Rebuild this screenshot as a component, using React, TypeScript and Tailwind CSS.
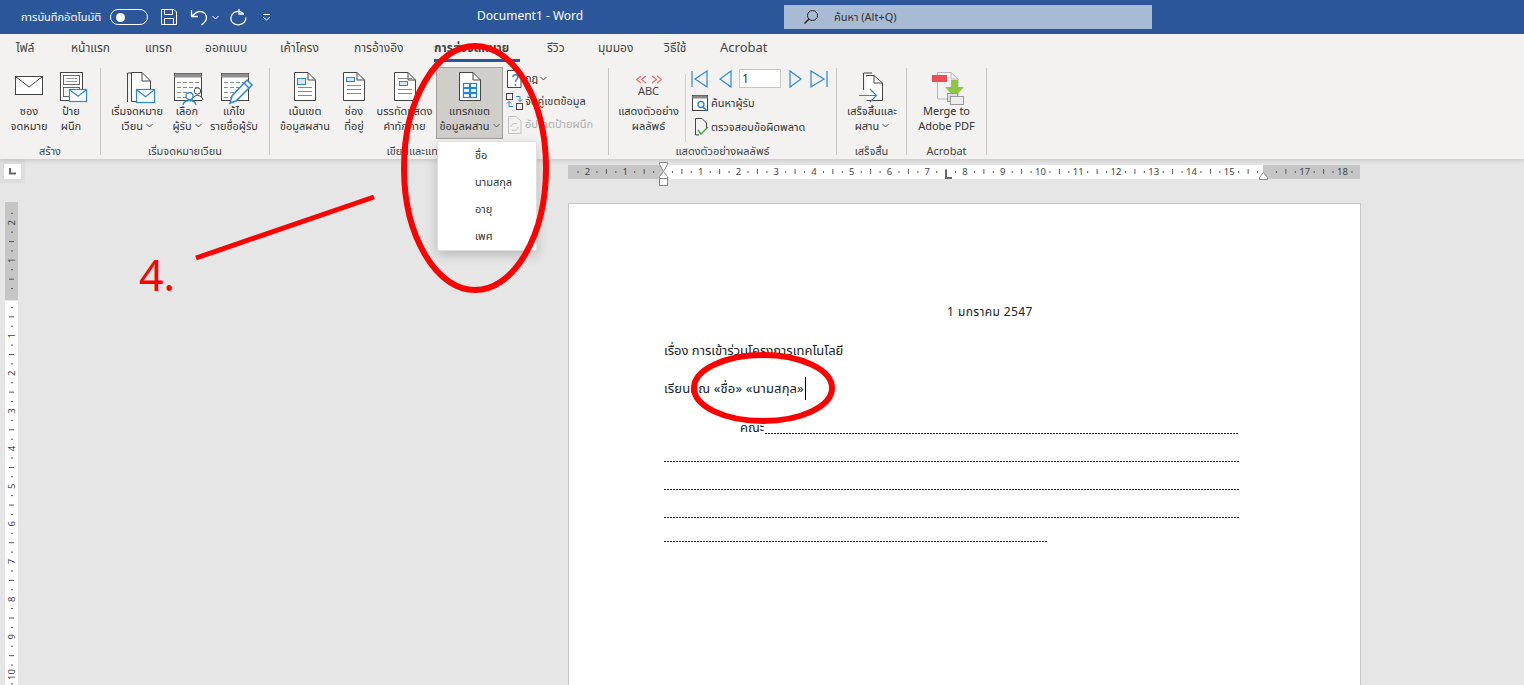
import React from "react";

const Doc = ({ children }: { children?: React.ReactNode }) => (
  <svg width="34" height="29" viewBox="0 0 34 29" fill="none">
    <path d="M6.500 .5H20L27.500 8V28.500H6.500Z" fill="#fff" stroke="#444" />
    <path d="M20 .5V8H27.500" stroke="#444" />
    {children}
  </svg>
);
const Lines = ({ y = 14, x = 10, w = 14, n = 4 }: { y?: number; x?: number; w?: number; n?: number }) => (
  <g stroke="#8a8a8a">
    {Array.from({ length: n }).map((_, i) => (
      <path key={i} d={`M${x} ${y + i * 4}.5h${w}`} />
    ))}
  </g>
);
const Envelope = ({ x, y, w, h }: { x: number; y: number; w: number; h: number }) => (
  <g>
    <rect x={x + 0.5} y={y + 0.5} width={w} height={h} fill="#fff" stroke="#2b88d8" strokeWidth="1.200" />
    <path d={`M${x + 1} ${y + 1}L${x + w / 2 + 0.5} ${y + h * 0.6}L${x + w} ${y + 1}`} stroke="#2b88d8" strokeWidth="1.200" fill="none" />
  </g>
);
const TableIcon = ({ children }: { children?: React.ReactNode }) => (
  <svg width="34" height="34" viewBox="-2 0 34 34" fill="none" className="overflow-visible">
    <rect x="2.500" y="1.500" width="27" height="27" fill="#fff" stroke="#444" />
    <rect x="2.500" y="1.500" width="27" height="4" fill="#8f8f8f" />
    <g stroke="#8a8a8a" strokeDasharray="4 2">
      <path d="M5 10.500h23M5 15.500h23M5 20.500h15M5 25.500h10" />
    </g>
    {children}
  </svg>
);

const Btn = ({ w, icon, l1, l2, caret }: { w: string; icon: React.ReactNode; l1: string; l2: string; caret?: boolean }) => (
  <div className={`flex flex-col items-center pt-[4px] shrink-0 ${w}`}>
    <div className="h-[31px] flex items-start justify-center">{icon}</div>
    <div className="leading-[15px] whitespace-nowrap text-center">{l1}</div>
    <div className="leading-[15px] whitespace-nowrap text-center flex items-center gap-[3px]">
      {l2}
      {caret && <Caret />}
    </div>
  </div>
);
const Caret = ({ c = "#555" }: { c?: string }) => (
  <svg width="7" height="5" viewBox="0 0 7 5" fill="none">
    <path d="M.5 1L3.500 4L6.500 1" stroke={c} />
  </svg>
);
const Group = ({ w, label, children }: { w: string; label: string; children: React.ReactNode }) => (
  <div className={`h-[87px] shrink-0 border-r border-[#c8c6c4] flex flex-col ${w}`}>
    <div className="h-[76px] flex">{children}</div>
    <div className="h-[11px] leading-[14px] text-center whitespace-nowrap text-[#444]">{label}</div>
  </div>
);

const tabs = [
  ["ไฟล์", "w-[55px]"],
  ["หน้าแรก", "w-[74px]"],
  ["แทรก", "w-[60px]"],
  ["ออกแบบ", "w-[75px]"],
  ["เค้าโครง", "w-[74px]"],
  ["การอ้างอิง", "w-[80px]"],
];

const HRuler = () => {
  const unit = 37.75;
  const zero = 95;
  const marks: React.ReactNode[] = [];
  for (let i = -3; i < 19; i++) {
    const x = zero + i * unit;
    if (i !== 0 && i !== 16 && x > 2 && x < 790) marks.push(<text key={`n${i}`} x={x} y={10} fontSize="9.500" textAnchor="middle" fill="#444" fontFamily="'Noto Sans', sans-serif">{Math.abs(i)}</text>);
    [0.25, 0.5, 0.75].forEach((f) => {
      const tx = x + f * unit;
      if (tx < 2 || tx > 790) return;
      marks.push(f === 0.5
        ? <path key={`t${i}${f}`} d={`M${tx} 4v5`} stroke="#555" />
        : <path key={`t${i}${f}`} d={`M${tx} 6v2`} stroke="#555" />);
    });
  }
  return (
    <svg width="792" height="24" viewBox="0 0 792 24" className="block overflow-visible">
      <rect x="0" y="0" width="792" height="14" fill="#c6c6c6" />
      <rect x="95" y="0" width="600" height="14" fill="#fff" />
      {marks}
      <path d="M378 5V13H384" stroke="#666" strokeWidth="2" fill="none" />
      <path d="M91.500 -2.500h8v2l-4 7l-4 -7z" fill="#fff" stroke="#888" />
      <path d="M95.500 6.500l4 5v2h-8v-2z" fill="#fff" stroke="#888" />
      <rect x="91.500" y="13.500" width="8" height="7" fill="#fff" stroke="#888" />
      <path d="M691.500 12.500l4 -5l4 5v2h-8z" fill="#fff" stroke="#888" />
    </svg>
  );
};

const VRuler = () => {
  const unit = 37.65;
  const zero = 96;
  const marks: React.ReactNode[] = [];
  for (let i = -3; i < 11; i++) {
    const y = zero + i * unit;
    if (i !== 0 && y > 2) marks.push(<text key={`n${i}`} transform={`translate(10,${y}) rotate(-90)`} fontSize="9.500" textAnchor="middle" fill="#444" fontFamily="'Noto Sans', sans-serif">{Math.abs(i)}</text>);
    [0.25, 0.5, 0.75].forEach((f) => {
      const ty = y + f * unit;
      if (ty < 2 || ty > 490) return;
      marks.push(f === 0.5
        ? <path key={`t${i}${f}`} d={`M4 ${ty}h5`} stroke="#555" />
        : <path key={`t${i}${f}`} d={`M6 ${ty}h2`} stroke="#555" />);
    });
  }
  return (
    <svg width="13" height="483" viewBox="0 0 13 483" className="block">
      <rect width="13" height="98" fill="#c6c6c6" />
      <rect y="99" width="13" height="384" fill="#fff" />
      {marks}
    </svg>
  );
};

const Dots = ({ w, ml }: { w: string; ml: string }) => (
  <div className={`h-px bg-[repeating-linear-gradient(90deg,#222_0_2px,transparent_2px_3px)] ${w} ${ml}`} />
);

export default function App() {
  return (
    <div className="relative w-[1524px] h-[685px] overflow-hidden bg-[#e6e6e6] flex flex-col text-[11px] text-[#333] font-['Noto_Sans','Noto_Sans_Thai','DejaVu_Sans',sans-serif]">
      {/* Title bar */}
      <div className="h-[34px] shrink-0 bg-[#2b579a] text-white flex items-center relative">
        <span className="ml-[21px] w-[89px] text-[11px] whitespace-nowrap">การบันทึกอัตโนมัติ</span>
        <div className="w-[38px] h-[16px] rounded-full border border-white flex items-center pl-[5px]">
          <div className="w-[9px] h-[9px] rounded-full bg-white" />
        </div>
        <svg width="18" height="18" viewBox="0 0 18 18" fill="none" stroke="#fff" className="ml-[12px]">
          <path d="M1.500 1.500H14L16.500 4V16.500H1.500Z" />
          <path d="M4.500 1.500V6.500H12.500V1.500M4.500 16.500V10.500H13.500V16.500" />
        </svg>
        <svg width="18" height="18" viewBox="0 0 18 18" fill="none" stroke="#fff" strokeWidth="1.300" className="ml-[12px]">
          <path d="M1.500 2V8.500H8M1.500 8.500C5 5 7 3.500 10 3.500C14 3.500 16.500 6.500 16.500 9.500C16.500 12 15 14.500 11.500 17" />
        </svg>
        <span className="ml-[4px]"><Caret c="#fff" /></span>
        <svg width="18" height="18" viewBox="0 0 18 18" fill="none" stroke="#fff" strokeWidth="1.300" className="ml-[10px]">
          <path d="M10 1V6H15" />
          <path d="M14.500 5.500C11 3 7.500 2.500 4.500 5C1 8 1 12.500 4 15C7 17.500 12 17.500 15 14.500C16.500 13 17 11 17 9.500" />
        </svg>
        <svg width="9" height="8" viewBox="0 0 9 8" fill="none" stroke="#fff" className="ml-[15px]">
          <path d="M1 1.500h7M1 4L4.500 7L8 4" />
        </svg>
        <span className="absolute left-[477px] top-[8px] text-[12px] leading-[16px] whitespace-nowrap">Document1  -  Word</span>
        <div className="absolute left-[784px] top-[5px] w-[368px] h-[24px] bg-[#a7bbd5] flex items-center text-[#333]">
          <svg width="16" height="16" viewBox="0 0 16 16" fill="none" stroke="#222" className="ml-[19px]">
            <circle cx="9.500" cy="6.500" r="5" />
            <path d="M6 10L1.500 14.500" strokeWidth="1.400" />
          </svg>
          <span className="ml-[15px] text-[11px] whitespace-nowrap">ค้นหา (Alt+Q)</span>
        </div>
      </div>

      {/* Tabs + ribbon */}
      <div className="h-[125px] shrink-0 bg-[#f3f2f1] shadow-[0_2px_4px_rgba(0,0,0,0.12)] relative z-10">
        <div className="h-[28px] flex items-center pl-[16px] text-[12px] text-[#444]">
          {tabs.map(([t, w]) => (
            <span key={t} className={`whitespace-nowrap ${w}`}>{t}</span>
          ))}
          <span className="relative w-[113px] h-[28px] leading-[28px] font-bold whitespace-nowrap">
            การส่งจดหมาย
            <span className="absolute left-0 bottom-0 w-[86px] h-[3px] bg-[#2b579a]" />
          </span>
          <span className="w-[51px] whitespace-nowrap">รีวิว</span>
          <span className="w-[66px] whitespace-nowrap">มุมมอง</span>
          <span className="w-[56px] whitespace-nowrap">วิธีใช้</span>
          <span className="whitespace-nowrap text-[13px]">Acrobat</span>
        </div>

        <div className="flex pt-[6px]">
          <Group w="w-[101px]" label="สร้าง">
            <div className="w-[8px] shrink-0" />
            <Btn w="w-[42px]" l1="ซอง" l2="จดหมาย" icon={
              <svg width="30" height="24" viewBox="0 0 30 24" fill="none" stroke="#444" className="mt-[3px]">
                <rect x="1.500" y="1.500" width="27" height="18" fill="#fff" />
                <path d="M1.500 1.500L15 12L28.500 1.500" />
              </svg>} />
            <Btn w="w-[42px]" l1="ป้าย" l2="ผนึก" icon={
              <svg width="32" height="32" viewBox="-3 0 32 32" fill="none" className="overflow-visible">
                <rect x="2.500" y=".5" width="22" height="28" fill="#fff" stroke="#444" />
                <rect x="5.500" y="3.500" width="16" height="9" stroke="#666" />
                <path d="M8 6.500h11M8 9.500h11" stroke="#999" />
                <rect x="5.500" y="15.500" width="16" height="9" stroke="#666" />
                <Envelope x={11} y={17} w={17} h={12} />
              </svg>} />
          </Group>
          <Group w="w-[169px]" label="เริ่มจดหมายเวียน">
            <div className="w-[6px] shrink-0" />
            <Btn w="w-[60px]" l1="เริ่มจดหมาย" l2="เวียน" caret icon={
              <svg width="32" height="32" viewBox="-4 0 32 32" fill="none" className="overflow-visible">
                <path d="M2.500 30V1H10" stroke="#444" />
                <path d="M6.500 29.500V.5H17L25.500 9V29.500Z" fill="#fff" stroke="#444" />
                <path d="M17 .5V9H25.500" stroke="#444" />
                <Envelope x={11} y={17} w={18} h={13} />
              </svg>} />
            <Btn w="w-[40px]" l1="เลือก" l2="ผู้รับ" caret icon={
              <TableIcon>
                <circle cx="25.500" cy="19" r="3.200" fill="#fff" stroke="#444" />
                <path d="M20 28c.5-3 3-4.500 5.500-4.500s5 1.500 5.500 4.500" fill="#fff" stroke="#444" />
                <circle cx="17.500" cy="24" r="3.500" fill="#fff" stroke="#2b88d8" strokeWidth="1.300" />
                <path d="M11 33c.5-3 3-4.500 6.500-4.500s6 1.500 6.500 4.500" fill="#fff" stroke="#2b88d8" strokeWidth="1.300" />
              </TableIcon>} />
            <Btn w="w-[54px]" l1="แก้ไข" l2="รายชื่อผู้รับ" icon={
              <TableIcon>
                <path d="M28 8L33 13L17 29L11 31L13 24Z" fill="#fff" stroke="#2b88d8" strokeWidth="1.500" />
                <path d="M25 11L30 16" stroke="#2b88d8" strokeWidth="1.500" />
              </TableIcon>} />
          </Group>
          <Group w="w-[339px]" label="เขียนและแทรกเขตข้อมูล">
            <div className="w-[5px] shrink-0" />
            <Btn w="w-[60px]" l1="เน้นเขต" l2="ข้อมูลผสาน" icon={
              <Doc><rect x="9.500" y="6.500" width="8" height="6" fill="#d6e8f7" stroke="#2b88d8" /><Lines y={15} n={3} /></Doc>} />
            <Btn w="w-[38px]" l1="ช่อง" l2="ที่อยู่" icon={
              <Doc><rect x="9.500" y="5.500" width="8" height="4" fill="#d6e8f7" stroke="#2b88d8" /><Lines y={13} n={3} /></Doc>} />
            <Btn w="w-[63px]" l1="บรรทัดแสดง" l2="คำทักทาย" icon={
              <Doc><Lines y={6} n={1} /><rect x="11.500" y="9.500" width="8" height="4" fill="#d6e8f7" stroke="#2b88d8" /><Lines y={17} n={2} /></Doc>} />
            <div className="w-[67px] h-[72px] -mt-px shrink-0 bg-[#cfcecb] border border-[#a19f9d] flex flex-col items-center pt-[4px] text-[#333]">
              <div className="h-[31px] flex items-start justify-center">
                <Doc>
                  <g stroke="#1f86d8" strokeWidth="1.200" fill="none">
                    <rect x="10.500" y="11.500" width="6" height="4" /><rect x="17.500" y="11.500" width="6" height="4" />
                    <rect x="10.500" y="16.500" width="6" height="4" /><rect x="17.500" y="16.500" width="6" height="4" />
                    <rect x="10.500" y="21.500" width="6" height="4" /><rect x="17.500" y="21.500" width="6" height="4" />
                  </g>
                </Doc>
              </div>
              <div className="leading-[15px] whitespace-nowrap">แทรกเขต</div>
              <div className="leading-[15px] whitespace-nowrap flex items-center gap-[3px]">ข้อมูลผสาน <Caret /></div>
            </div>
            <div className="ml-[3px] -mt-px flex flex-col text-[11px]">
              <div className="h-[23px] flex items-center gap-[2px]">
                <svg width="17" height="20" viewBox="0 0 17 20" fill="none">
                  <path d="M1.500 1.500H10L15 6V18.500H1.500Z" fill="#fff" stroke="#444" />
                  <path d="M7 8c0-3 5-3 5 0c0 2-2.500 2-2.500 5M9.500 15v2" stroke="#2b88d8" strokeWidth="1.500" />
                </svg>
                <span>กฎ</span><Caret />
              </div>
              <div className="h-[23px] flex items-center gap-[2px] whitespace-nowrap">
                <svg width="17" height="17" viewBox="0 0 17 17" fill="none">
                  <rect x=".5" y=".5" width="6" height="6" stroke="#444" />
                  <rect x="10.500" y="10.500" width="6" height="6" stroke="#444" />
                  <path d="M10 3.500h4v5M12 6.500l2 2l2-2M7 13.500H3v-5M1 10.500l2-2l2 2" stroke="#2b88d8" />
                </svg>
                <span>จับคู่เขตข้อมูล</span>
              </div>
              <div className="h-[23px] flex items-center gap-[2px] whitespace-nowrap text-[#b0aeac]">
                <svg width="17" height="18" viewBox="0 0 17 18" fill="none" stroke="#c4c2c0">
                  <path d="M2.500 .5H10L15 5V17.500H2.500Z" />
                  <path d="M5 11c0-3 3-4 6-3M12 11c0 3-3 4-6 3" />
                </svg>
                <span>อัปเดตป้ายผนึก</span>
              </div>
            </div>
          </Group>
          <Group w="w-[228px]" label="แสดงตัวอย่างผลลัพธ์">
            <div className="w-[3px] shrink-0" />
            <Btn w="w-[73px]" l1="แสดงตัวอย่าง" l2="ผลลัพธ์" icon={
              <div className="flex flex-col items-center mt-[3px]">
                <svg width="28" height="9" viewBox="0 0 28 9" fill="none" stroke="#ef6a6a" strokeWidth="1.100">
                  <path d="M6 1L1.500 4.500L6 8M11 1L6.500 4.500L11 8M17 1L21.500 4.500L17 8M22 1L26.500 4.500L22 8" />
                </svg>
                <span className="text-[11px] leading-[14px] text-[#444]">ABC</span>
              </div>} />
            <div className="w-px h-[68px] bg-[#d2d0ce] mt-[6px] shrink-0" />
            <div className="ml-[5px] -mt-[2px] flex flex-col">
              <div className="h-[25px] flex items-center">
                <svg width="18" height="20" viewBox="0 0 18 20" fill="none" stroke="#2b88d8" strokeWidth="1.200">
                  <path d="M1 2v16M16 2L4 10l12 8z" />
                </svg>
                <svg width="14" height="20" viewBox="0 0 14 20" fill="none" stroke="#2b88d8" strokeWidth="1.200" className="ml-[9px]">
                  <path d="M13 2L2 10l11 8z" />
                </svg>
                <div className="ml-[7px] w-[42px] h-[19px] bg-white border border-[#c8c6c4] text-[12px] leading-[17px] pl-[2px]">1</div>
                <svg width="14" height="20" viewBox="0 0 14 20" fill="none" stroke="#2b88d8" strokeWidth="1.200" className="ml-[7px]">
                  <path d="M2 2l11 8l-11 8z" />
                </svg>
                <svg width="18" height="20" viewBox="0 0 18 20" fill="none" stroke="#2b88d8" strokeWidth="1.200" className="ml-[8px]">
                  <path d="M1 2l13 8l-13 8zM17 2v16" />
                </svg>
              </div>
              <div className="h-[25px] flex items-center gap-[2px] whitespace-nowrap pl-px">
                <svg width="17" height="18" viewBox="0 0 17 18" fill="none">
                  <rect x=".5" y=".5" width="15" height="15" fill="#fff" stroke="#444" />
                  <rect x=".5" y=".5" width="15" height="3" fill="#888" />
                  <circle cx="9" cy="9.500" r="3" stroke="#2b88d8" strokeWidth="1.400" />
                  <path d="M11 12l4 4" stroke="#2b88d8" strokeWidth="1.600" />
                </svg>
                <span>ค้นหาผู้รับ</span>
              </div>
              <div className="h-[22px] flex items-center gap-[2px] whitespace-nowrap pl-[3px]">
                <svg width="15" height="18" viewBox="0 0 15 18" fill="none">
                  <path d="M1.500 .5H8L12.500 5V10" stroke="#444" /><path d="M1.500 .5V17H5" stroke="#444" />
                  <path d="M4 12l3 4l7-7" stroke="#3fa34d" strokeWidth="1.400" />
                </svg>
                <span>ตรวจสอบข้อผิดพลาด</span>
              </div>
            </div>
          </Group>
          <Group w="w-[70px]" label="เสร็จสิ้น">
            <Btn w="w-[70px]" l1="เสร็จสิ้นและ" l2="ผสาน" caret icon={
              <svg width="32" height="32" viewBox="0 0 32 32" fill="none">
                <path d="M7.500 1H16" stroke="#444" />
                <path d="M10.500 4.500V3.500H18L26.500 11V28.500H10.500" fill="#fff" stroke="#444" />
                <path d="M18 3.500V11H26.500" stroke="#444" />
                <path d="M7.500 1V18" stroke="#444" />
                <path d="M3 23.500H20M14 17L20.500 23.500L14 30" stroke="#2b88d8" strokeWidth="1.200" />
              </svg>} />
          </Group>
          <Group w="w-[80px]" label="Acrobat">
            <Btn w="w-[79px]" l1="Merge to" l2="Adobe PDF" icon={
              <svg width="34" height="32" viewBox="-2 0 34 32" fill="none" className="overflow-visible">
                <path d="M5.500 .5H19L26 7V27H5.500Z" fill="#f4f4f4" stroke="#b8b8b8" />
                <path d="M19 .5V7H26" stroke="#b8b8b8" />
                <rect x="0" y="3" width="15" height="7" fill="#ee4d55" />
                <path d="M19 8H26V15H32L22.500 25L13 15H19Z" fill="#8cc63f" />
                <rect x="15.500" y="21.500" width="10" height="8" fill="#ddd" stroke="#999" />
                <rect x="18.500" y="24.500" width="13" height="8" fill="#eee" stroke="#999" />
              </svg>} />
          </Group>
        </div>
      </div>

      {/* Rulers row */}
      <div className="h-[43px] shrink-0 flex">
        <div className="w-[25px] h-[24px] bg-[#dedede] flex items-start justify-center pt-[5px]">
          <div className="w-[17px] h-[15px] bg-white flex items-center justify-center">
            <svg width="8" height="7" viewBox="0 0 8 7"><path d="M1 0V5.500H7" stroke="#666" strokeWidth="2" fill="none" /></svg>
          </div>
        </div>
        <div className="ml-[543px] mt-[6px]"><HRuler /></div>
      </div>

      {/* Document area */}
      <div className="flex-1 flex min-h-0">
        <div className="w-[18px] pl-[5px] shrink-0"><VRuler /></div>
        <div className="ml-[550px] mt-[1px] w-[793px] h-[500px] bg-white border border-[#c6c6c6] pl-[95px] text-[13px] text-[#222]">
          <div className="h-[99px]" />
          <div className="w-[652px] text-center text-[12px] tracking-[0.4px] leading-[18px] h-[38px]">1 มกราคม 2547</div>
          <div className="leading-[18px] h-[38px] whitespace-nowrap">เรื่อง การเข้าร่วมโครงการเทคโนโลยี</div>
          <div className="leading-[18px] h-[30px] flex whitespace-nowrap tracking-[0.13px]">
            เรียนคุณ «ชื่อ» «นามสกุล»
            <span className="w-px h-[23px] bg-black ml-px -mt-[2px]" />
          </div>
          <div className="pl-[76px] pt-[9px] leading-[18px] h-[24px] whitespace-nowrap">คณะ</div>
          <Dots w="w-[474px]" ml="ml-[101px]" />
          <div className="h-[27px]" />
          <Dots w="w-[575px]" ml="ml-0" />
          <div className="h-[27px]" />
          <Dots w="w-[575px]" ml="ml-0" />
          <div className="h-[27px]" />
          <Dots w="w-[575px]" ml="ml-0" />
          <div className="h-[23px]" />
          <Dots w="w-[383px]" ml="ml-0" />
        </div>
      </div>

      {/* Field dropdown menu */}
      <div className="absolute left-[437px] top-[141px] w-[100px] h-[110px] z-20 bg-white rounded-[2px] border border-[#e1dfdd] shadow-[0_4px_12px_rgba(0,0,0,0.2)] flex flex-col text-[11px] text-[#333]">
        {["ชื่อ", "นามสกุล", "อายุ", "เพศ"].map((t) => (
          <div key={t} className="h-[27px] leading-[25px] pl-[37px] whitespace-nowrap">{t}</div>
        ))}
      </div>

      {/* Red annotations */}
      <svg width="1524" height="685" viewBox="0 0 1524 685" fill="none" className="absolute left-0 top-0 z-30 pointer-events-none">
        <ellipse cx="475" cy="168" rx="71" ry="122" stroke="#ff0000" strokeWidth="6" />
        <ellipse cx="763" cy="388" rx="69" ry="33" stroke="#ff0000" strokeWidth="6" />
        <path d="M196 258L374 197" stroke="#ff0000" strokeWidth="5" />
      </svg>
      <span className="absolute left-[139px] top-[245px] z-30 text-[43px] leading-[60px] text-[#ff0000] font-['Noto_Sans',sans-serif]">4.</span>
    </div>
  );
}
